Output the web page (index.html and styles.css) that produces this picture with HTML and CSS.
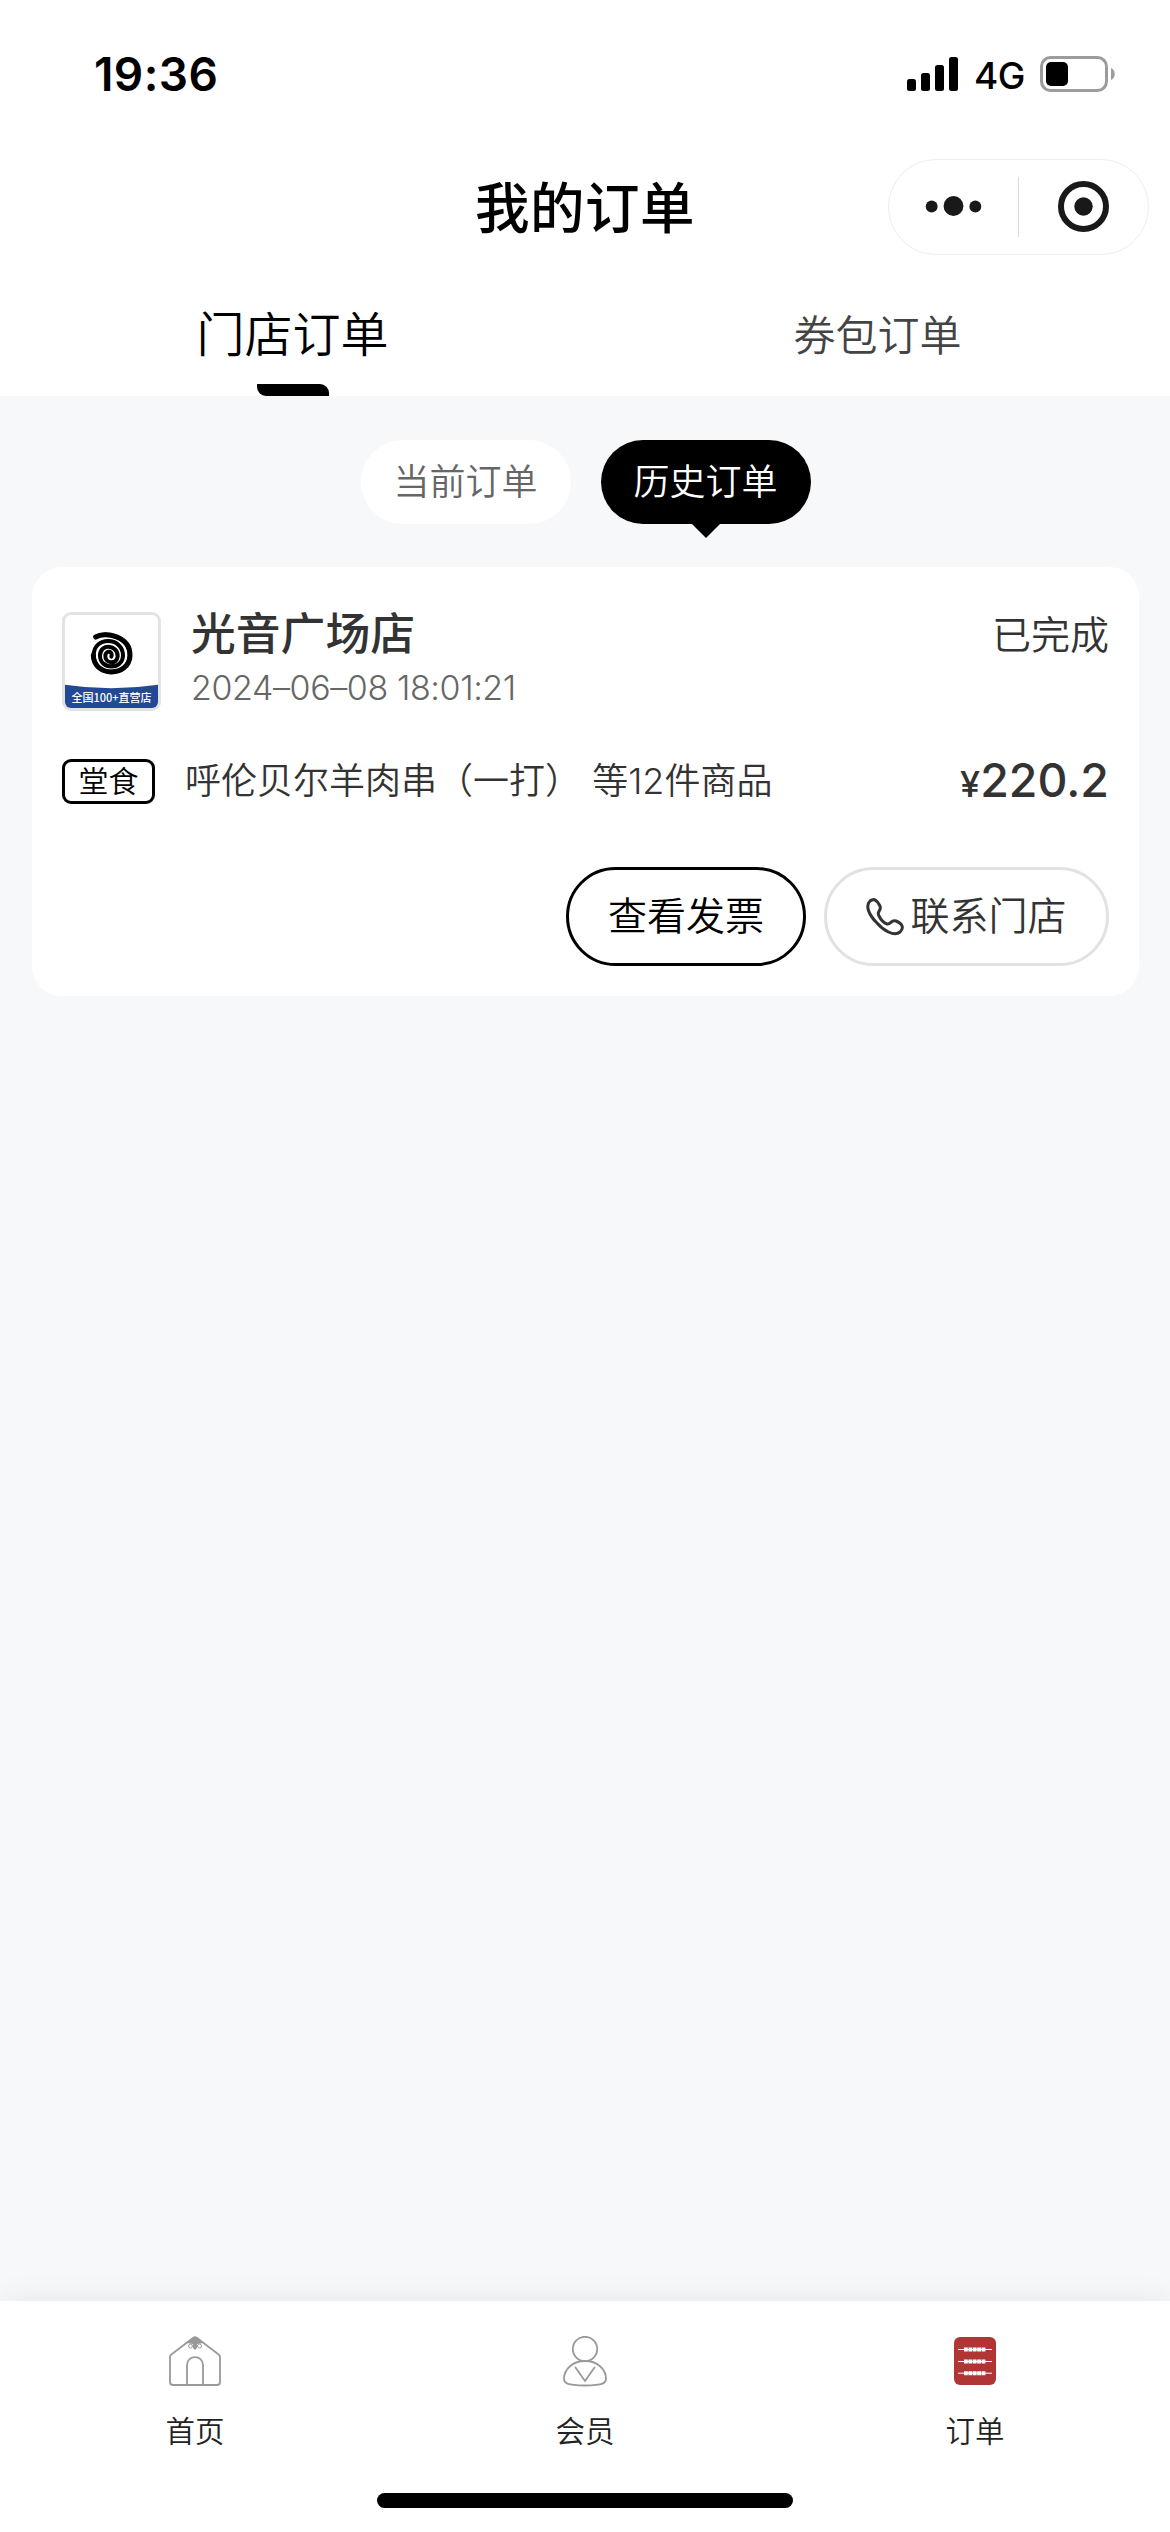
FILE: index.html
```html
<!DOCTYPE html>
<html lang="zh">

<head>
    <meta charset="UTF-8">
    <meta name="viewport" content="width=device-width, initial-scale=1.0">
    <title>我的订单</title>
    <link rel="stylesheet" href="styles.css">
</head>

<body>
    <header class="header">
        <div class="status-bar">
            <span class="time">19:36</span>
            <div class="status-icons">
                <svg class="signal" viewBox="0 0 51 34">
                    <rect x="0" y="22" width="9" height="12" rx="2.5" />
                    <rect x="14" y="16" width="9" height="18" rx="2.5" />
                    <rect x="28" y="8" width="9" height="26" rx="2.5" />
                    <rect x="42" y="0" width="9" height="34" rx="2.5" />
                </svg>
                <span class="network">4G</span>
                <svg class="battery" viewBox="0 0 76 36">
                    <rect x="1.5" y="1.5" width="65" height="33" rx="9" fill="none" stroke="#9c9c9c" stroke-width="3" />
                    <rect x="6" y="6" width="22" height="24" rx="5" />
                    <path d="M71 12c5 2 5 10 0 12z" fill="#9c9c9c" />
                </svg>
            </div>
        </div>
        <div class="nav-bar">
            <h1 class="title">我的订单</h1>
            <div class="capsule">
                <svg viewBox="0 0 130 96">
                    <circle cx="43" cy="47.5" r="6" />
                    <circle cx="65" cy="47" r="10" />
                    <circle cx="87" cy="47.5" r="6" />
                </svg>
                <i class="capsule-line"></i>
                <svg viewBox="0 0 128 96">
                    <circle cx="64" cy="47.5" r="22.5" fill="none" stroke="#191919" stroke-width="6" />
                    <circle cx="64" cy="47.5" r="9.2" />
                </svg>
            </div>
        </div>
        <nav class="tabs">
            <div class="tab active">门店订单</div>
            <div class="tab">券包订单</div>
        </nav>
    </header>

    <main class="main">
        <div class="filters">
            <div class="filter">当前订单</div>
            <div class="filter active">历史订单</div>
        </div>

        <section class="card">
            <div class="store">
                <svg class="logo" viewBox="45 45 279 279">
                    <!-- 螺旋标志 -->
                    <path d="M139 110C164 93 240 108 239 166C238 232 131 232 131 166C131 108 218 110 219 166C219 211 149 210 150 166C151 129 204 134 203 169C201 196 164 191 166 166C169 148 190 154 184 170" fill="none" stroke="#000" stroke-width="12" stroke-linecap="round" />
                    <path d="M137 111C165 94 242 108 240 168C236 233 130 231 130 166" fill="none" stroke="#000" stroke-width="15" stroke-linecap="round" />
                    <path d="M45 254Q184 275 324 254V324H45Z" fill="#214994" />
                    <text x="184.500" y="305" text-anchor="middle" textLength="240">全国100+直营店</text>
                </svg>
                <div class="store-info">
                    <h2 class="store-name">光音广场店</h2>
                    <div class="date">2024–06–08 18:01:21</div>
                </div>
                <span class="state">已完成</span>
            </div>
            <div class="goods">
                <span class="tag">堂食</span>
                <span class="goods-name">呼伦贝尔羊肉串（一打） 等12件商品</span>
                <span class="price"><small>¥</small>220.2</span>
            </div>
            <div class="actions">
                <button class="btn btn-dark">查看发票</button>
                <button class="btn">
                    <svg class="phone" viewBox="0 0 38 38">
                        <path d="M4 3C8 0 11 2 14 8C16 13 10 13 13 18C15 22 18 25 21 26C25 27 25 21 30 23C37 26 38 30 34 34C28 39 17 32 11 25C3 17-1 8 4 3Z" />
                    </svg>
                    <span>联系门店</span>
                </button>
            </div>
        </section>
    </main>

    <footer class="tab-bar">
        <div class="tab-items">
            <div class="tab-item">
                <svg viewBox="0 0 52 52">
                    <path d="M1 21Q1 19 3 18L24 2Q26 .5 28 2L49 18Q51 19 51 21V46Q51 49 48 49H4Q1 49 1 46Z" />
                    <path d="M18 49V29C18 18.500 34 18.500 34 29V49" />
                    <path d="M18 7L25 1.500H27L34 7L28 8V12L26 14L24 12V8Z" fill="#999" stroke="none" />
                    <circle cx="21.500" cy="10" r="2" stroke-width="1" />
                    <circle cx="30.500" cy="10" r="2" stroke-width="1" />
                </svg>
                <span>首页</span>
            </div>
            <div class="tab-item">
                <svg viewBox="0 0 52 52">
                    <circle cx="26" cy="13" r="12.200" />
                    <path d="M26 25C14 25 5 33 5 43C5 47 7 49 26 49.500C45 49 47 47 47 43C47 33 38 25 26 25Z" />
                    <path d="M16.500 31.500L26 45L35.500 31.500" stroke-linecap="round" />
                </svg>
                <span>会员</span>
            </div>
            <div class="tab-item">
                <svg viewBox="0 0 52 52">
                    <rect x="5" y="1" width="42" height="48" rx="6" fill="#b03535" stroke="none" />
                    <path d="M9 13.500H43M9 25.500H43M9 37.200H43" stroke="#fff" stroke-width="1" />
                    <path d="M15 13.500H37M15 25.500H37M15 37.200H37" stroke="#fff" stroke-width="4" stroke-dasharray="3.800 .6" />
                </svg>
                <span>订单</span>
            </div>
        </div>
        <div class="home-line"></div>
    </footer>
</body>

</html>
```

FILE: styles.css
```css
* {
    margin: 0;
    padding: 0;
    box-sizing: border-box;
}

body {
    display: flex;
    flex-direction: column;
    width: 1170px;
    height: 2532px;
    background: #f7f8fa;
    color: #333;
    font-family: Inter, 'Noto Sans CJK SC', sans-serif;
    font-weight: 350;
    overflow: hidden;
}

.header {
    height: 396px;
    background: #fff;
}

/* 状态栏 */
.status-bar {
    display: flex;
    justify-content: space-between;
    align-items: center;
    height: 150px;
    padding: 0 54px 2px 94px;
    color: #000;
}

.time {
    font-size: 46px;
    font-weight: 600;
    letter-spacing: 0.4px;
}

.status-icons {
    display: flex;
    align-items: center;
}

.signal {
    width: 51px;
    height: 34px;
}

.network {
    margin: 3px 15px 0 16px;
    font-size: 37px;
    font-weight: 500;
    letter-spacing: -0.5px;
}

.battery {
    width: 76px;
    height: 36px;
}

/* 导航栏 */
.nav-bar {
    display: grid;
    grid-template-columns: 1fr auto 1fr;
    align-items: center;
    height: 114px;
    padding-right: 21px;
    padding-left: 21px;
}

.title {
    grid-column: 2;
    padding-top: 2px;
    color: #000;
    font-size: 54.500px;
    font-weight: 500;
    line-height: 80px;
    letter-spacing: 0.5px;
}

.capsule {
    display: flex;
    justify-self: end;
    align-items: center;
    width: 261px;
    height: 96px;
    border: 1px solid #ededed;
    border-radius: 48px;
    fill: #191919;
}

.capsule svg {
    flex: 1;
    height: 96px;
}

.capsule-line {
    width: 1px;
    height: 60px;
    background: #dcdcdc;
}

.tabs {
    display: flex;
    height: 132px;
}

.tab {
    position: relative;
    flex: 1;
    padding-top: 37px;
    color: #444;
    font-size: 42px;
    line-height: 70px;
    text-align: center;
}

.tab.active {
    padding-top: 36px;
    color: #000;
    font-size: 48px;
}

.tab.active::after {
    content: '';
    position: absolute;
    bottom: 0;
    left: 257px;
    width: 72px;
    height: 12px;
    background: #000;
    border-radius: 0 9px 0 9px;
}

.main {
    flex: 1;
    padding: 44px 31px 0 32px;
}

.filters {
    display: flex;
    justify-content: center;
    gap: 30px;
    margin-bottom: 43px;
}

.filter {
    position: relative;
    width: 210px;
    height: 84px;
    background: #fff;
    border-radius: 42px;
    color: #666;
    font-size: 36px;
    line-height: 84px;
    text-align: center;
}

.filter.active {
    background: #000;
    color: #fff;
}

.filter.active::after {
    content: '';
    position: absolute;
    top: 84px;
    left: 91px;
    border: 14px solid transparent;
    border-top-color: #000;
    border-bottom: 0;
}

/* 订单卡片 */
.card {
    height: 429px;
    padding: 45px 30px 30px;
    background: #fff;
    border-radius: 30px;
}

.store {
    display: flex;
    height: 99px;
}

.logo {
    width: 99px;
    height: 99px;
    border: 3px solid #e3e3e3;
    border-radius: 9px;
}

.logo text {
    fill: #fff;
    font-family: 'Noto Sans CJK SC', sans-serif;
    font-size: 33px;
    font-weight: 500;
}

.store-info {
    flex: 1;
    margin-left: 30px;
}

.store-name {
    height: 54px;
    margin-top: -7px;
    font-size: 44.800px;
    font-weight: 500;
    line-height: 58px;
}

.date {
    color: #666;
    font-size: 34px;
    font-weight: 330;
    line-height: 58px;
    letter-spacing: -0.4px;
}

.state {
    margin-top: -6px;
    font-size: 39px;
    line-height: 58px;
}

.goods {
    display: flex;
    align-items: center;
    height: 54px;
    margin-top: 43px;
}

.tag {
    width: 93px;
    height: 45px;
    border: 3px solid #000;
    border-radius: 9px;
    color: #000;
    font-size: 30px;
    line-height: 39px;
    text-align: center;
}

.goods-name {
    flex: 1;
    margin-left: 30px;
    font-size: 36px;
    line-height: 56px;
    white-space: nowrap;
    word-spacing: 1px;
}

.price {
    padding-top: 2px;
    font-size: 46.500px;
    font-weight: 500;
    line-height: 54px;
}

.price small {
    font-size: 36px;
}

.actions {
    display: flex;
    justify-content: flex-end;
    gap: 18px;
    margin-top: 59px;
}

.btn {
    display: flex;
    justify-content: center;
    gap: 6px;
    width: 285px;
    height: 99px;
    background: #fff;
    border: 3px solid #e2e2e2;
    border-radius: 50px;
    color: #333;
    font: inherit;
    font-size: 39px;
    line-height: 91px;
}

.btn-dark {
    width: 240px;
    border-color: #000;
    color: #000;
}

.phone {
    width: 38px;
    height: 38px;
    margin-top: 28px;
    fill: none;
    stroke: #333;
    stroke-width: 3;
}

/* 底部导航 */
.tab-bar {
    position: relative;
    height: 231px;
    background: #fff;
    box-shadow: 0 0 30px rgba(0, 0, 0, 0.08);
}

.tab-items {
    display: flex;
    padding-top: 35px;
}

.tab-item {
    display: flex;
    flex: 1;
    flex-direction: column;
    align-items: center;
    color: #222;
    font-size: 29.500px;
    line-height: 44px;
}

.tab-item svg {
    width: 52px;
    height: 52px;
    margin-bottom: 21px;
    fill: none;
    stroke: #999;
    stroke-width: 1.8;
}

.home-line {
    width: 416px;
    height: 15px;
    margin: 40px auto 0;
    background: #000;
    border-radius: 8px;
}
```
